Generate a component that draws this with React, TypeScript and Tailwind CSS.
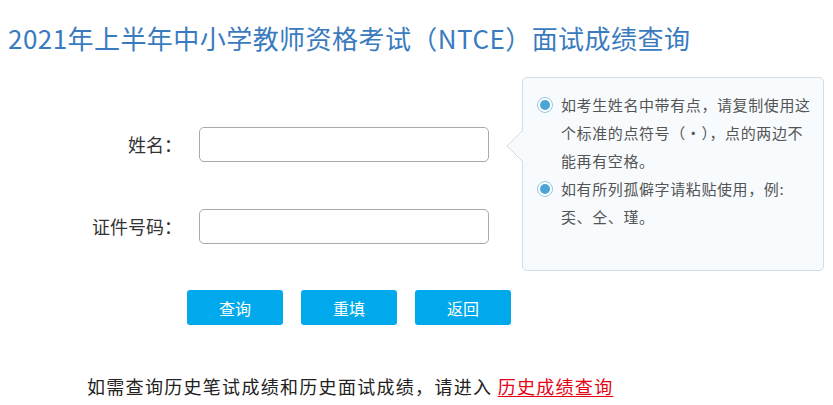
const font = { fontFamily: '"Microsoft YaHei", "Noto Sans CJK SC", sans-serif' };

const Bullet = () => (
  <span className="mt-[6px] flex h-[16px] w-[16px] shrink-0 items-center justify-center rounded-full border border-[#96c8e2] bg-white">
    <span className="h-[10px] w-[10px] rounded-full bg-[#4ba5d6]" />
  </span>
);

const Field = ({ label }: { label: string }) => (
  <div className="flex h-[35px] items-center">
    <label className="w-[182px] text-right text-[18px] text-[#333]">{label}</label>
    <input
      type="text"
      className="ml-[17px] h-[35px] w-[290px] rounded-[5px] border border-[#a9a9a9] bg-white outline-none"
    />
  </div>
);

const Tip = () => (
  <div className="relative ml-[16px] h-[194px] w-[302px] rounded-[5px] border border-[#d3dbe4] bg-[#f7fbfd] pl-[14px] pt-[13px] text-[15px] leading-[28px] tracking-[0.6px] text-[#555]">
    <svg
      className="absolute left-[-17px] top-[52px]"
      width="18"
      height="32"
      viewBox="0 0 18 32"
    >
      <polygon points="18,0 1,16 18,32" fill="#f7fbfd" />
      <polyline points="17,0 1,16 17,32" fill="none" stroke="#d3dbe4" strokeWidth="1" />
    </svg>
    <div className="flex gap-[8px]">
      <Bullet />
      <p className="whitespace-nowrap">
        如考生姓名中带有点，请复制使用这
        <br />
        个标准的点符号（·），点的两边不
        <br />
        能再有空格。
      </p>
    </div>
    <div className="flex gap-[8px]">
      <Bullet />
      <p className="whitespace-nowrap">
        如有所列孤僻字请粘贴使用，例:
        <br />
        奀、仝、瑾。
      </p>
    </div>
  </div>
);

const App = () => {
  return (
    <div className="h-[405px] w-[833px] overflow-hidden bg-white" style={font}>
      <h1 className="pl-[8px] pt-[22px] text-[26px] leading-[32px] font-normal tracking-[0.45px] text-[#3a7bbf]">
        2021年上半年中小学教师资格考试（NTCE）面试成绩查询
      </h1>

      <div className="mt-[23px] flex">
        <div className="w-[506px] shrink-0 pt-[50px]">
          <Field label="姓名：" />
          <div className="h-[47px]" />
          <Field label="证件号码：" />
          <div className="ml-[187px] mt-[46px] flex gap-[18px]">
            {["查询", "重填", "返回"].map(t => (
              <button
                key={t}
                className="h-[35px] w-[96px] shrink-0 rounded-[3px] bg-[#00a9ec] text-[16px] text-white"
              >
                {t}
              </button>
            ))}
          </div>
        </div>
        <Tip />
      </div>

      <p className="ml-[87px] mt-[49px] text-[18px] leading-[24px] tracking-[1.3px] text-[#222]">
        如需查询历史笔试成绩和历史面试成绩，请进入{" "}
        <a href="#" className="text-[#e60012] underline underline-offset-2">
          历史成绩查询
        </a>
      </p>
    </div>
  );
};

export default App;
